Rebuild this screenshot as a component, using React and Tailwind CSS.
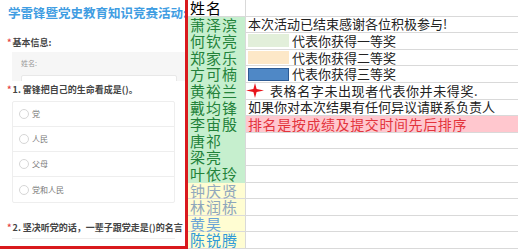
import React from "react";

const cjk = { fontFamily: '"Noto Sans CJK SC", "Noto Sans", sans-serif' };

const names = [
  { n: "萧泽滨", s: "good" },
  { n: "何钦亮", s: "good" },
  { n: "郑家乐", s: "good" },
  { n: "方可楠", s: "good" },
  { n: "黄裕兰", s: "good" },
  { n: "戴均锋", s: "good" },
  { n: "李宙殷", s: "good" },
  { n: "唐祁", s: "good" },
  { n: "梁亮", s: "good" },
  { n: "叶依玲", s: "good" },
  { n: "钟庆贤", s: "pale", c: "text-[#93a9bd]" },
  { n: "林润栋", s: "pale", c: "text-[#8ea6bb]" },
  { n: "黄昊", s: "pale", c: "text-[#6aa3d6]" },
  { n: "陈锐腾", s: "pale", c: "text-[#2f9ad8]" },
];

function Swatch({ className }) {
  return <span className={`inline-block w-[41px] h-[13px] shrink-0 ${className}`} />;
}

function Star() {
  return (
    <svg width="18" height="15" viewBox="0 0 18 15" className="shrink-0">
      <path d="M9 0 L10.6 5.9 L18 7.5 L10.6 9.1 L9 15 L7.4 9.1 L0 7.5 L7.4 5.9 Z" fill="#e8141b" />
    </svg>
  );
}

function noteFor(i) {
  switch (i) {
    case 0:
      return <span className="pl-[2px]">本次活动已结束感谢各位积极参与!</span>;
    case 1:
      return (
        <span className="flex items-center pl-[2px]">
          <Swatch className="bg-[#e2efda]" />
          <span className="ml-[3px]">代表你获得一等奖</span>
        </span>
      );
    case 2:
      return (
        <span className="flex items-center pl-[2px]">
          <Swatch className="bg-[#fde8c8]" />
          <span className="ml-[3px]">代表你获得二等奖</span>
        </span>
      );
    case 3:
      return (
        <span className="flex items-center pl-[2px]">
          <Swatch className="bg-[#4f88c6] border border-[#2c5a93]" />
          <span className="ml-[3px]">代表你获得三等奖</span>
        </span>
      );
    case 4:
      return (
        <span className="flex items-center">
          <Star />
          <span className="ml-[6px] tracking-[0.6px]">表格名字未出现者代表你并未得奖.</span>
        </span>
      );
    case 5:
      return <span className="pl-[2px]">如果你对本次结果有任何异议请联系负责人</span>;
    case 6:
      return <span className="pl-[2px] text-[14px] tracking-[0.6px] text-[#e3343c]">排名是按成绩及提交时间先后排序</span>;
    default:
      return null;
  }
}

function Radio({ label, last }) {
  return (
    <div className={`h-[25px] flex items-center pl-[6px] ${last ? "" : "border-b border-[#eeeeee]"}`}>
      <span className="w-[10px] h-[10px] rounded-full border border-[#d6d6d6] shrink-0" />
      <span className="ml-[3px] text-[8px] text-[#777]">{label}</span>
    </div>
  );
}

function FormPanel() {
  return (
    <div
      className="w-[188px] h-[249px] shrink-0 border-r-[3px] border-b-[3px] border-[#d9191d] bg-white overflow-hidden flex flex-col"
      style={cjk}
    >
      <div className="pl-[8px] pt-[5px] text-[12.5px] leading-[16px] font-bold text-[#3f9de2] whitespace-nowrap">
        学雷锋暨党史教育知识竞赛活动:
      </div>
      <div className="mt-[16px] pl-[7px] text-[9px] leading-[12px] font-bold text-[#444] flex">
        <span className="text-[#e54545] mr-[1px]">*</span>基本信息:
      </div>
      <div className="mt-[3px] ml-[12px] h-[36px] bg-[#f6f6f6] overflow-hidden pl-[9px] pr-[8px] pt-[6px]">
        <div className="text-[7px] leading-[10px] text-[#999]">姓名:</div>
        <div className="mt-[7px] h-[20px] bg-white border border-[#e8e8e8] rounded-[2px]" />
      </div>
      <div className="mt-[3px] pl-[7px] text-[9px] leading-[12px] font-bold text-[#444] flex whitespace-nowrap">
        <span className="text-[#e54545] mr-[1px]">*</span>1. 雷锋把自己的生命看成是()。
      </div>
      <div className="mt-[5px] ml-[12px] w-[163px] border border-[#eeeeee] rounded-[2px]">
        <Radio label="党" />
        <Radio label="人民" />
        <Radio label="父母" />
        <Radio label="党和人民" last />
      </div>
      <div className="mt-[19px] pl-[7px] text-[9px] leading-[12px] font-bold text-[#444] flex whitespace-nowrap">
        <span className="text-[#e54545] mr-[1px]">*</span>2. 坚决听党的话，一辈子跟党走是()的名言
      </div>
      <div className="mt-[4px] ml-[12px] w-[163px] h-[10px] border-t border-[#eeeeee]" />
    </div>
  );
}

function Sheet() {
  return (
    <div className="flex-1 h-[249px] overflow-hidden bg-white" style={cjk}>
      <div className="flex h-[16.6px] border-b border-[#d9d9d9]">
        <div className="w-[58px] shrink-0 border-r border-[#d9d9d9] pl-[2px] text-[15px] tracking-[1px] leading-[16.6px] text-black">
          姓名
        </div>
        <div className="flex-1" />
      </div>
      {names.map((r, i) => {
        const good = r.s === "good";
        return (
          <div key={r.n} className="flex h-[16.6px]">
            <div
              className={`w-[58px] shrink-0 border-r border-[#d9d9d9] pl-[2px] text-[15px] tracking-[1px] leading-[16.6px] whitespace-nowrap ${
                good ? "bg-[#c6efce] text-[#23823a]" : `bg-[#fffdd2] border-b ${r.c}`
              }`}
            >
              {r.n}
            </div>
            <div
              className={`flex-1 flex items-center border-b border-[#d9d9d9] text-[13px] leading-[16px] text-[#222] whitespace-nowrap ${
                i === 6 ? "bg-[#ffc7ce]" : ""
              }`}
            >
              {noteFor(i)}
            </div>
          </div>
        );
      })}
    </div>
  );
}

export default function App() {
  return (
    <div className="w-[518px] h-[249px] flex overflow-hidden bg-white">
      <FormPanel />
      <Sheet />
    </div>
  );
}
